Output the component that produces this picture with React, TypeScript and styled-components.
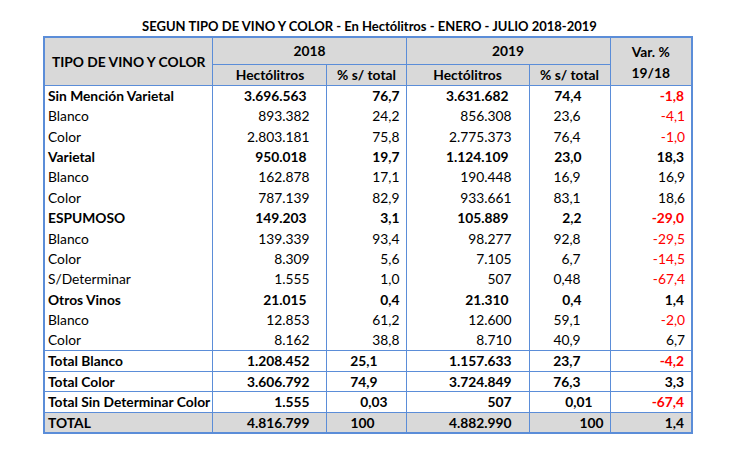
import React from 'react';
import styled, { createGlobalStyle } from 'styled-components';

const GlobalStyle = createGlobalStyle`
  body {
    margin: 0;
    background: #ffffff;
    font-family: Lato, "Liberation Sans", Arial, sans-serif;
    color: #000000;
  }
`;

const Page = styled.div`
  width: 735px;
  height: 459px;
  display: flex;
  flex-direction: column;
  align-items: center;
  padding-top: 17px;
  box-sizing: border-box;
`;

const Title = styled.div`
  font-size: 13px;
  font-weight: 700;
  height: 19px;
  line-height: 19px;
  margin-left: 4px;
`;

const Table = styled.table`
  border-collapse: collapse;
  table-layout: fixed;
  width: 649px;
  margin-left: 1px;
  font-size: 13.8px;
  border: 2px solid #5b8dd8;
`;

const HeadCell = styled.th<{ $h?: number }>`
  background: #d9d9d9;
  border: 1.5px solid #5b8dd8;
  font-weight: 700;
  text-align: center;
  padding: 0;
  height: ${(p) => p.$h ?? 20}px;
  line-height: 1;
`;

const TwoLines = styled.div`
  line-height: 21px;
  padding-top: 1px;
`;

const Row = styled.tr<{ $total?: boolean; $grey?: boolean }>`
  height: ${(p) => (p.$total ? 20.7 : 20.4)}px;
  background: ${(p) => (p.$grey ? '#d9d9d9' : 'transparent')};
  font-weight: ${(p) => (p.$total ? 700 : 'inherit')};
  td {
    border-top: ${(p) => (p.$total ? '1.5px solid #5b8dd8' : 'none')};
  }
`;

const Cell = styled.td<{ $bold?: boolean; $red?: boolean; $pr?: number; $left?: boolean }>`
  padding: 0 ${(p) => p.$pr ?? 6}px 0 ${(p) => (p.$left ? 3 : 0)}px;
  text-align: ${(p) => (p.$left ? 'left' : 'right')};
  font-weight: ${(p) => (p.$bold ? 700 : 'inherit')};
  color: ${(p) => (p.$red ? '#ff0000' : 'inherit')};
  border-left: 1.5px solid #5b8dd8;
  border-right: 1.5px solid #5b8dd8;
  white-space: nowrap;
  line-height: 1;
`;

type Values = [string, string, string, string, string];

type Line = {
  name: string;
  bold?: boolean;
  v: Values;
};

const lines: Line[] = [
  { name: 'Sin Mención Varietal', bold: true, v: ['3.696.563', '76,7', '3.631.682', '74,4', '-1,8'] },
  { name: 'Blanco', v: ['893.382', '24,2', '856.308', '23,6', '-4,1'] },
  { name: 'Color', v: ['2.803.181', '75,8', '2.775.373', '76,4', '-1,0'] },
  { name: 'Varietal', bold: true, v: ['950.018', '19,7', '1.124.109', '23,0', '18,3'] },
  { name: 'Blanco', v: ['162.878', '17,1', '190.448', '16,9', '16,9'] },
  { name: 'Color', v: ['787.139', '82,9', '933.661', '83,1', '18,6'] },
  { name: 'ESPUMOSO', bold: true, v: ['149.203', '3,1', '105.889', '2,2', '-29,0'] },
  { name: 'Blanco', v: ['139.339', '93,4', '98.277', '92,8', '-29,5'] },
  { name: 'Color', v: ['8.309', '5,6', '7.105', '6,7', '-14,5'] },
  { name: 'S/Determinar', v: ['1.555', '1,0', '507', '0,48', '-67,4'] },
  { name: 'Otros Vinos', bold: true, v: ['21.015', '0,4', '21.310', '0,4', '1,4'] },
  { name: 'Blanco', v: ['12.853', '61,2', '12.600', '59,1', '-2,0'] },
  { name: 'Color', v: ['8.162', '38,8', '8.710', '40,9', '6,7'] },
];

// pr = right padding of the two "% s/ total" cells, they don't line up in the source sheet
type Total = { name: string; v: Values; pr: [number, number]; grey?: boolean };

const totals: Total[] = [
  { name: 'Total Blanco', v: ['1.208.452', '25,1', '1.157.633', '23,7', '-4,2'], pr: [28, 29] },
  { name: 'Total Color', v: ['3.606.792', '74,9', '3.724.849', '76,3', '3,3'], pr: [28, 29] },
  { name: 'Total Sin Determinar Color', v: ['1.555', '0,03', '507', '0,01', '-67,4'], pr: [18, 17] },
  { name: 'TOTAL', v: ['4.816.799', '100', '4.882.990', '100', '1,4'], pr: [31, 6], grey: true },
];

const isRed = (s: string) => s.startsWith('-');

export default function App() {
  return (
    <Page>
      <GlobalStyle />
      <Title>SEGUN TIPO DE VINO Y COLOR - En Hectólitros - ENERO - JULIO 2018-2019</Title>
      <Table>
        <colgroup>
          <col style={{ width: 169 }} />
          <col style={{ width: 114 }} />
          <col style={{ width: 79 }} />
          <col style={{ width: 123 }} />
          <col style={{ width: 81 }} />
          <col style={{ width: 82 }} />
        </colgroup>
        <thead>
          <tr>
            <HeadCell rowSpan={2}>TIPO DE VINO Y COLOR</HeadCell>
            <HeadCell colSpan={2} $h={26}>2018</HeadCell>
            <HeadCell colSpan={2} $h={26}>2019</HeadCell>
            <HeadCell rowSpan={2}>
              <TwoLines>
                Var. %
                <br />
                19/18
              </TwoLines>
            </HeadCell>
          </tr>
          <tr>
            <HeadCell>Hectólitros</HeadCell>
            <HeadCell>% s/ total</HeadCell>
            <HeadCell>Hectólitros</HeadCell>
            <HeadCell>% s/ total</HeadCell>
          </tr>
        </thead>
        <tbody>
          {lines.map((l, i) => (
            <Row key={i}>
              <Cell $left $bold={l.bold}>{l.name}</Cell>
              <Cell $bold={l.bold} $pr={l.bold ? 20 : 17}>{l.v[0]}</Cell>
              <Cell $bold={l.bold} $pr={6}>{l.v[1]}</Cell>
              <Cell $bold={l.bold} $pr={l.bold ? 20 : 17}>{l.v[2]}</Cell>
              <Cell $bold={l.bold} $pr={l.bold ? 28 : 29}>{l.v[3]}</Cell>
              <Cell $bold={l.bold} $red={isRed(l.v[4])} $pr={l.bold ? 7 : 6}>{l.v[4]}</Cell>
            </Row>
          ))}
          {totals.map((t, i) => (
            <Row key={i} $total $grey={t.grey}>
              <Cell $left>{t.name}</Cell>
              <Cell $pr={17}>{t.v[0]}</Cell>
              <Cell $pr={t.pr[0]}>{t.v[1]}</Cell>
              <Cell $pr={17}>{t.v[2]}</Cell>
              <Cell $pr={t.pr[1]}>{t.v[3]}</Cell>
              <Cell $red={isRed(t.v[4])} $pr={7}>{t.v[4]}</Cell>
            </Row>
          ))}
        </tbody>
      </Table>
    </Page>
  );
}
